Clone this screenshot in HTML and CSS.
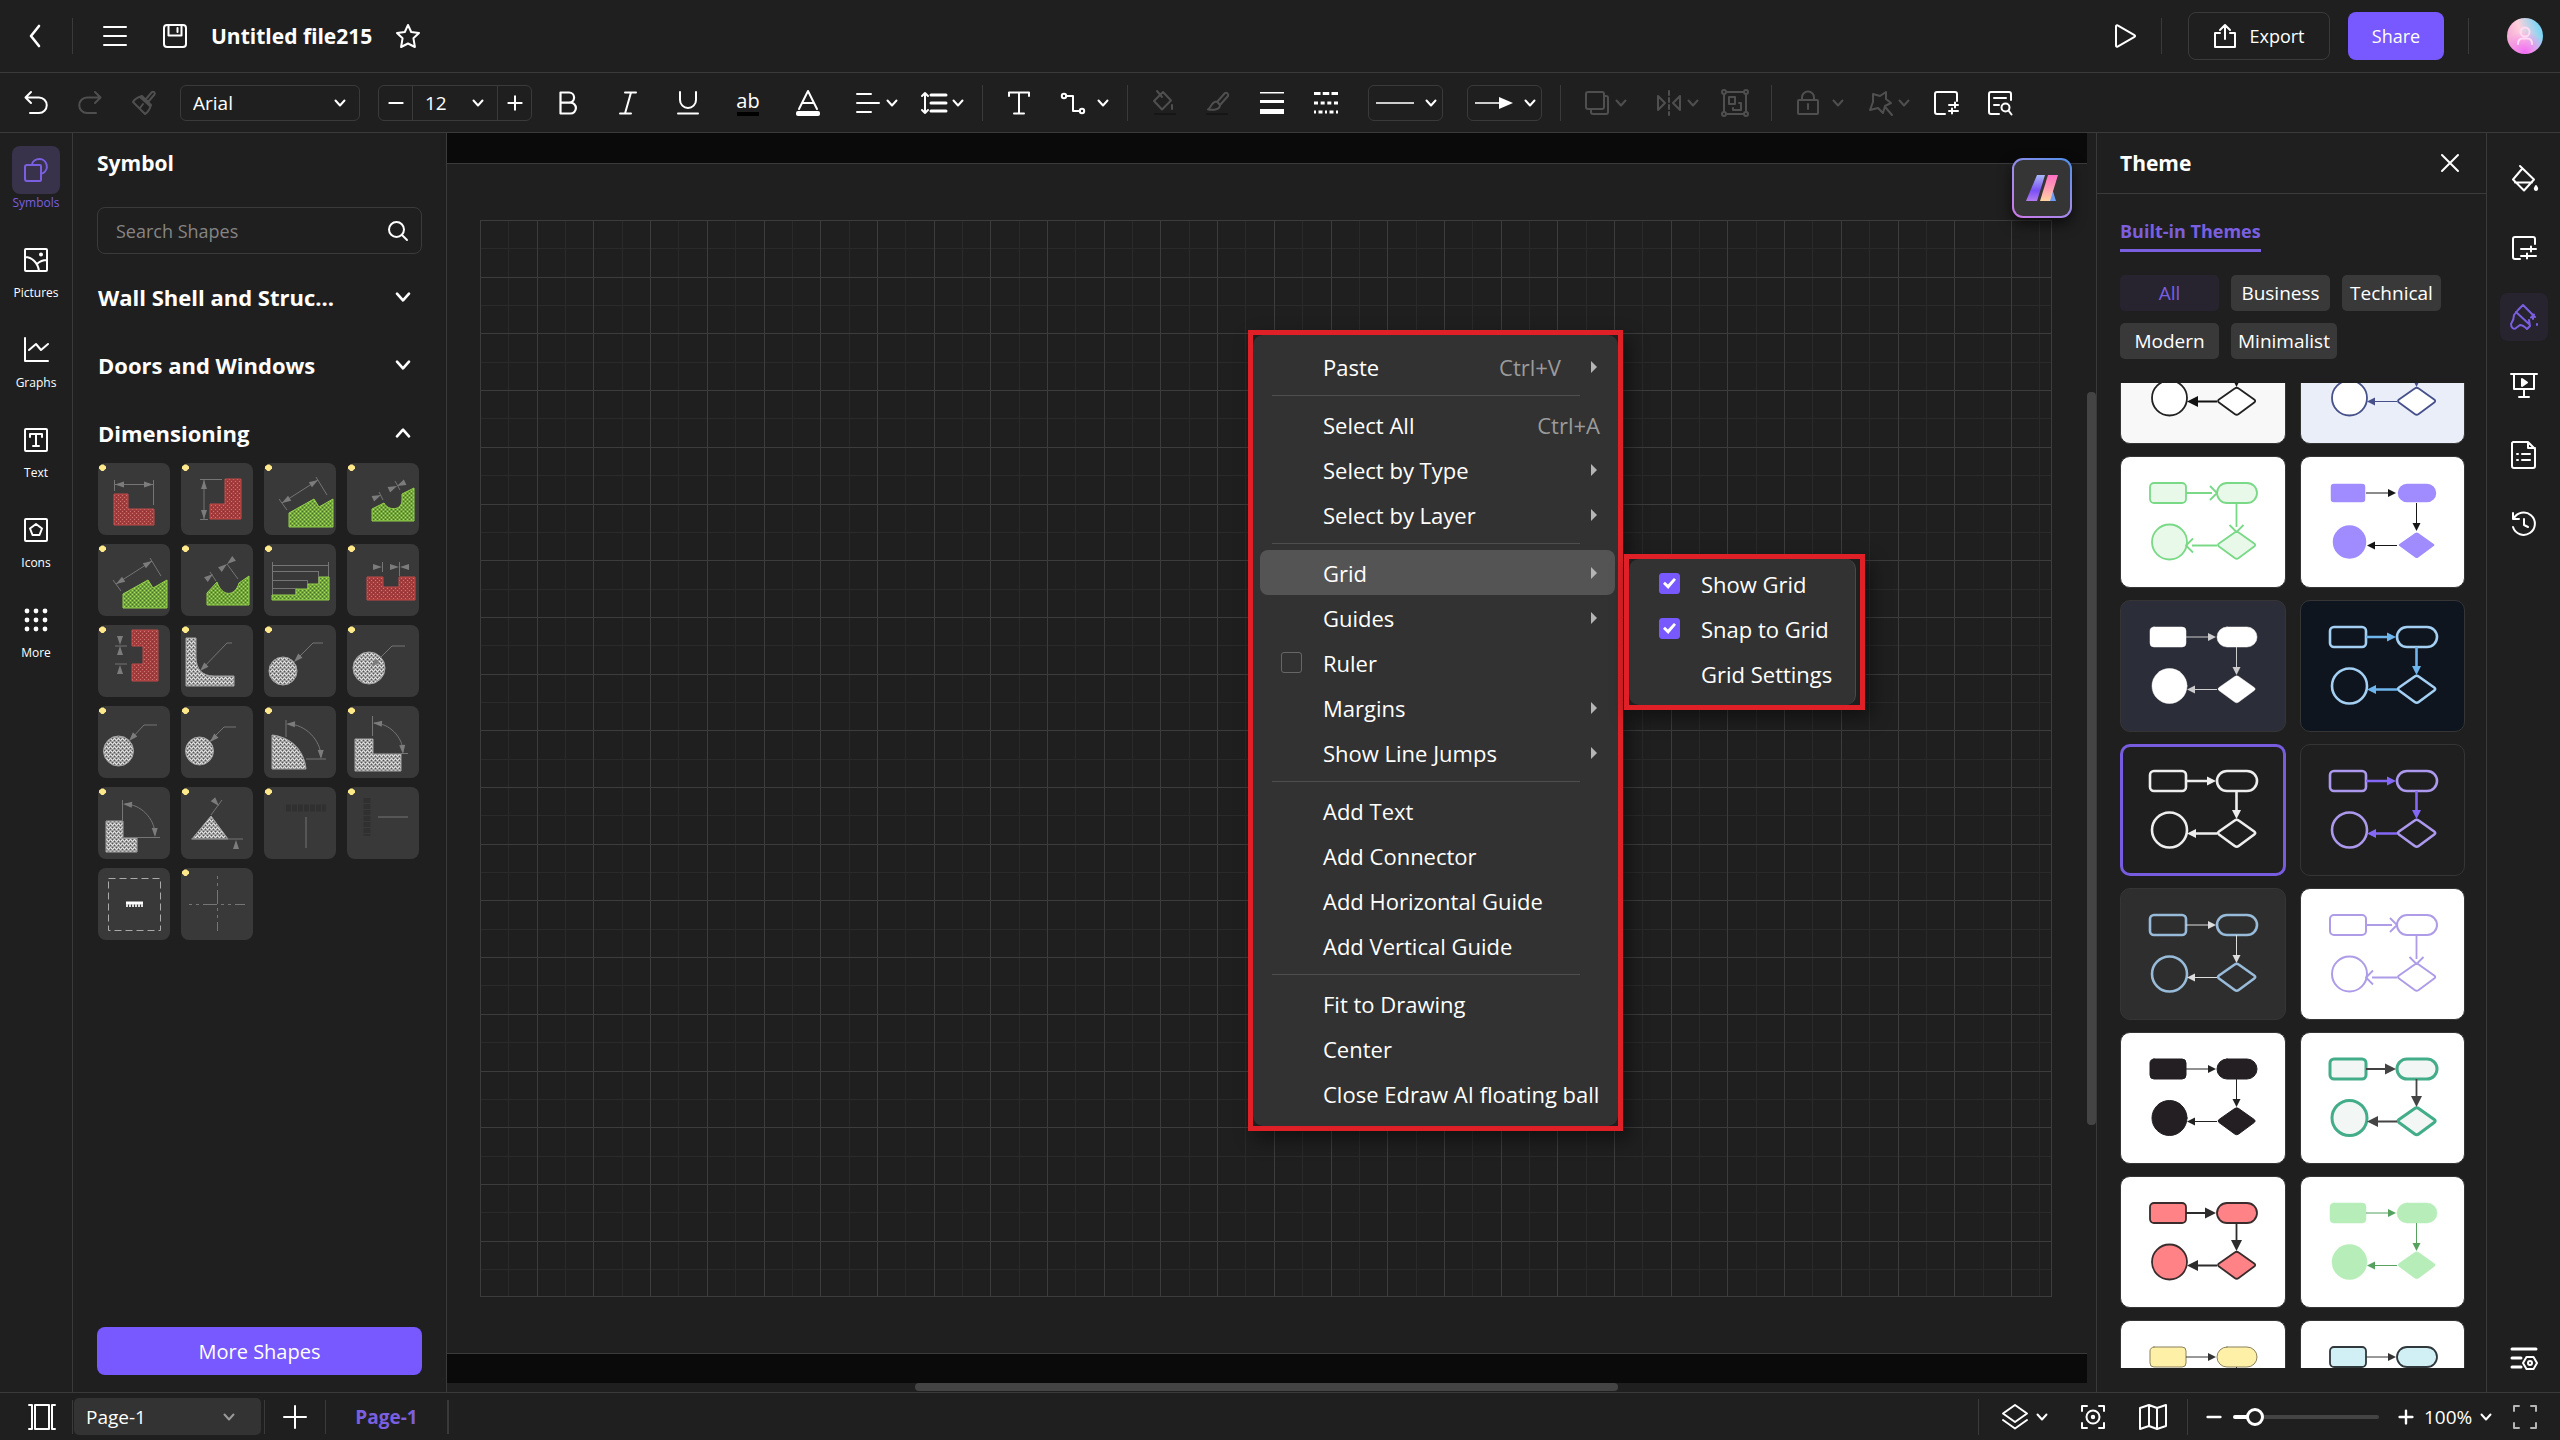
FILE: index.html
```html
<!DOCTYPE html>
<html lang="en">
<head>
    <meta charset="UTF-8">
    <meta name="viewport" content="width=device-width, initial-scale=1.0">
    <title>Untitled file215</title>
    <link rel="stylesheet" href="styles.css">
</head>
<body>
    <!-- shared symbols and hatch patterns -->
    <svg class="defs" width="0" height="0" aria-hidden="true">
        <defs>
            <symbol id="chevron" viewBox="0 0 12 12"><path d="M1.5 3.5 6 8.5l4.5-5"/></symbol>
            <symbol id="caret" viewBox="0 0 6 12"><path d="M0 0v12l6-6z" fill="#b5b5b5" stroke="none"/></symbol>
            <pattern id="red" width="4" height="4" patternUnits="userSpaceOnUse" stroke="none">
                <rect width="4" height="4" fill="#a23c3c"/><path d="M0 0h1v1H0zM2 2h1v1H2z" fill="#cf7674"/><path d="M2 0h1v1H2z" fill="#8b3334"/>
            </pattern>
            <pattern id="green" width="4" height="4" patternUnits="userSpaceOnUse" stroke="none">
                <rect width="4" height="4" fill="#72a53b"/><path d="M0 0h1v1H0zM2 2h1v1H2z" fill="#a7dc5c"/><path d="M2 0h1v1H2zM0 2h1v1H0z" fill="#48702a"/>
            </pattern>
            <pattern id="grey" width="4" height="4" patternUnits="userSpaceOnUse" stroke="none">
                <rect width="4" height="4" fill="#a2a2a2"/><path d="M0 0h1v1H0zM2 2h1v1H2zM1 1h1v1H1zM3 1h1v1H3z" fill="#e2e2e2"/><path d="M2 0h1v1H2zM0 2h1v1H0z" fill="#555"/>
            </pattern>
            <linearGradient id="aiLeft" x1="0" y1="0" x2="0" y2="1"><stop offset="0" stop-color="#a9b8f5"/><stop offset=".6" stop-color="#7a50f5"/><stop offset="1" stop-color="#b27bf0"/></linearGradient>
            <linearGradient id="aiRight" x1="0" y1="0" x2="0" y2="1"><stop offset="0" stop-color="#ff6fc3"/><stop offset=".5" stop-color="#ff9cb4"/><stop offset="1" stop-color="#ffd3a0"/></linearGradient>
        </defs>
    </svg>

    <header class="topbar">
        <button class="icon-btn" aria-label="Back"><svg class="icon" viewBox="0 0 24 24"><path d="M15 2 7 12l8 10" stroke-width="2.6"/></svg></button>
        <span class="sep sep-home"></span>
        <button class="icon-btn" aria-label="Menu"><svg class="icon" viewBox="0 0 24 24"><path d="M1 3h22M1 12h22M1 21h22"/></svg></button>
        <button class="icon-btn btn-save" aria-label="Save"><svg class="icon" viewBox="0 0 24 24"><path d="M1 4a3 3 0 0 1 3-3h16a3 3 0 0 1 3 3v16a3 3 0 0 1-3 3H4a3 3 0 0 1-3-3zM5.500 1v10.500h13V1M14.500 4v4"/></svg></button>
        <h1 class="file-name">Untitled file215</h1>
        <button class="icon-btn" aria-label="Favorite"><svg class="icon" viewBox="0 0 24 24"><path d="m12 1 3.200 7 7.800.9-5.600 5.300 1.500 8.800L12 19.500 5.100 23l1.500-8.800L1 8.900 8.800 8z"/></svg></button>
        <div class="top-right">
            <button class="icon-btn" aria-label="Present"><svg class="icon" viewBox="0 0 24 24"><path d="M3 2.200v19.600a1 1 0 0 0 1.600.8l16.900-9.700a1 1 0 0 0 0-1.800L4.600 1.400A1 1 0 0 0 3 2.200z"/></svg></button>
            <span class="sep"></span>
            <button class="btn btn-export"><svg class="icon" viewBox="0 0 24 24"><path d="M12 15V1.500M7 6l5-5 5 5M7 9H2v14h20V9h-5"/></svg>Export</button>
            <button class="btn btn-share">Share</button>
            <span class="sep sep-user"></span>
            <button class="avatar" aria-label="Account"><svg viewBox="0 0 36 36"><circle cx="18" cy="14" r="4.500"/><path d="M11 26c0-4 2-5.500 4.500-5.500h5c2.500 0 4.500 1.500 4.500 5.500"/></svg></button>
        </div>
    </header>

    <div class="toolbar" role="toolbar" aria-label="Format">
        <button class="tool" aria-label="Undo"><svg class="icon" viewBox="0 0 24 24"><path d="M7 1 1.500 6.500 7 12M2 6.500h13a7.500 7.500 0 0 1 0 15.500H6"/></svg></button>
        <button class="tool" aria-label="Redo" disabled><svg class="icon" viewBox="0 0 24 24"><path d="m17 1 5.500 5.500L17 12M22 6.500H9A7.500 7.500 0 0 0 9 22h9"/></svg></button>
        <button class="tool" aria-label="Format painter" disabled><svg class="icon" viewBox="0 0 24 24"><path d="m1 11 12 12c4-2 5-6 6-9l-9-9c-3 1-7 2-9 6zM8 6l10 9M14 8l6-7c1.500-1 3.500 1 2.500 2.500L16 11M8 17l3-4"/></svg></button>
        <div class="picker picker-font">
            <select aria-label="Font"><option>Arial</option></select>
            <svg class="chev"><use href="#chevron"/></svg>
        </div>
        <div class="stepper">
            <button aria-label="Smaller text"><svg class="icon" viewBox="0 0 24 24"><path d="M4 12h16" stroke-width="2.400"/></svg></button>
            <div class="picker">
                <select aria-label="Font size"><option>12</option></select>
                <svg class="chev"><use href="#chevron"/></svg>
            </div>
            <button aria-label="Larger text"><svg class="icon" viewBox="0 0 24 24"><path d="M4 12h16M12 4v16" stroke-width="2.400"/></svg></button>
        </div>
        <div class="text-tools">
            <button class="tool" aria-label="Bold"><svg class="icon" viewBox="0 0 24 24"><path d="M4.500 1.500H13a5 5 0 0 1 0 10.200H4.500zM4.500 11.700h10a5.300 5.300 0 0 1 0 10.800h-10z" stroke-width="2.200"/></svg></button>
            <button class="tool" aria-label="Italic"><svg class="icon" viewBox="0 0 24 24"><path d="M9 1.500h11M4 22.500h11M15 1.500 9 22.500"/></svg></button>
            <button class="tool" aria-label="Underline"><svg class="icon" viewBox="0 0 24 24"><path d="M4 1v8a8 8 0 0 0 16 0V1M2 22.500h20"/></svg></button>
            <button class="tool tool-mark" aria-label="Highlight color"><span>ab</span><i></i></button>
            <button class="tool" aria-label="Font color"><svg class="icon" viewBox="0 0 24 24"><path d="M3 18 12 0l9 18M6 12h12"/><rect y="20" width="24" height="5" rx="2" fill="#fff" stroke="none"/></svg></button>
        </div>
        <button class="tool-drop" aria-label="Align"><svg class="icon" viewBox="0 0 24 24"><path d="M1 3h14M1 12h22M1 21h14"/></svg><svg class="chev"><use href="#chevron"/></svg></button>
        <button class="tool-drop" aria-label="Line spacing"><svg class="icon" viewBox="0 0 24 24"><path d="M9 4h15M9 12h15M9 20h15" stroke-width="3"/><path d="M3 2v20M0 5l3-3 3 3M0 19l3 3 3-3"/></svg><svg class="chev"><use href="#chevron"/></svg></button>
        <span class="sep"></span>
        <button class="tool" aria-label="Text box"><svg class="icon" viewBox="0 0 24 24"><path d="M2 5V1.500h20V5M12 1.500v21M7 22.500h10"/></svg></button>
        <button class="tool-drop wide" aria-label="Connector"><svg class="icon" viewBox="0 0 24 24"><circle cx="3" cy="5" r="2.200"/><circle cx="21" cy="20" r="2.200"/><path d="M5 5h7v15h7"/></svg><svg class="chev"><use href="#chevron"/></svg></button>
        <span class="sep"></span>
        <button class="tool" aria-label="Fill" disabled><svg class="icon" viewBox="0 0 24 24"><path d="m5 0 5 6M11 1 2 10l8 8.500 9-9zM20 14v4"/><path d="M3 23h20" stroke="#161616"/></svg></button>
        <button class="tool" aria-label="Line color" disabled><svg class="icon" viewBox="0 0 24 24"><path d="m11 11 8-9c1.500-1 4 1 3 3l-8 9M11 10.500c-6 0-6 7-9 8 6 1 12 0 12-4.500z"/><path d="M1 23h20" stroke="#161616"/></svg></button>
        <button class="tool" aria-label="Line weight"><svg class="icon" viewBox="0 0 24 24"><path d="M0 1h24v1.500H0zM0 9h24v3H0zM0 18h24v5H0z" fill="#fff" stroke="none"/></svg></button>
        <button class="tool" aria-label="Line dash"><svg class="icon dash" viewBox="0 0 24 24"><path d="M0 2.500h24" stroke-dasharray="6.500 2.250"/><path d="M0 12h24" stroke-dasharray="4 2.660"/><path d="M0 21h24" stroke-dasharray="2 2.500 4 2.500"/></svg></button>
        <button class="tool-box" aria-label="Line style"><svg class="line-icon" viewBox="0 0 38 24"><path d="M0 12h38" stroke="#ccc" stroke-width="2"/></svg><svg class="chev"><use href="#chevron"/></svg></button>
        <button class="tool-box" aria-label="Arrow style"><svg class="line-icon" viewBox="0 0 38 24"><path d="M0 12h26" stroke="#ccc" stroke-width="2"/><path d="M24 6v12l14-6z" fill="#fff" stroke="none"/></svg><svg class="chev"><use href="#chevron"/></svg></button>
        <span class="sep"></span>
        <button class="tool-drop" aria-label="Arrange" disabled><svg class="icon" viewBox="0 0 24 24"><path d="M3 1h14a2 2 0 0 1 2 2v13a2 2 0 0 1-2 2H3a2 2 0 0 1-2-2V3a2 2 0 0 1 2-2zM20 5h1a2 2 0 0 1 2 2v14a2 2 0 0 1-2 2H8a2 2 0 0 1-2-2v-2"/></svg><svg class="chev"><use href="#chevron"/></svg></button>
        <button class="tool-drop tool-flip" aria-label="Flip" disabled><svg class="icon" viewBox="0 0 24 24"><path d="M1 5v14l7-7zM23 5v14l-7-7z"/><path d="M12 0v24" stroke-dasharray="4 3"/></svg><svg class="chev"><use href="#chevron"/></svg></button>
        <button class="tool" aria-label="Group" disabled><svg class="icon icon-lg" viewBox="0 0 28 28"><path d="M5 3h18M5 25h18M3 5v18M25 5v18M8 8h6v7H8zM18 14h2v7h-8v-2"/><circle cx="3" cy="3" r="2"/><circle cx="25" cy="3" r="2"/><circle cx="3" cy="25" r="2"/><circle cx="25" cy="25" r="2"/></svg></button>
        <span class="sep"></span>
        <button class="tool-drop wide" aria-label="Lock" disabled><svg class="icon" viewBox="0 0 24 24"><path d="M3 9h18a1 1 0 0 1 1 1v12a1 1 0 0 1-1 1H3a1 1 0 0 1-1-1V10a1 1 0 0 1 1-1zM6 9V6.500a6 6 0 0 1 12 0V9M12 13v5"/></svg><svg class="chev"><use href="#chevron"/></svg></button>
        <button class="tool-drop" aria-label="Effects" disabled><svg class="icon" viewBox="0 0 24 24"><path d="m5 3 7 2 6-4v7l5 4-6 3-2 7-5-5-8 2 3-8zM18 17l6 7"/></svg><svg class="chev"><use href="#chevron"/></svg></button>
        <button class="tool" aria-label="Page setup"><svg class="icon" viewBox="0 0 24 24"><path d="M23 10V3a2 2 0 0 0-2-2H3a2 2 0 0 0-2 2v18a2 2 0 0 0 2 2h8M15 14h9M15 20h9M21 11.500v5M18 17.500v5"/></svg></button>
        <button class="tool" aria-label="Find"><svg class="icon" viewBox="0 0 24 24"><path d="M23 9V3a2 2 0 0 0-2-2H3a2 2 0 0 0-2 2v18a2 2 0 0 0 2 2h8M6 7h12M6 14h5"/><circle cx="17.500" cy="16.500" r="4"/><path d="m20.500 19.500 3 4"/></svg></button>
    </div>

    <main class="workspace">
        <nav class="rail" aria-label="Libraries">
            <a href="#symbols" class="rail-item active"><span class="rail-icon"><svg class="icon" viewBox="0 0 24 24"><path d="M8 7C8 3 12 1 15.500 1a7.500 7.500 0 0 1 3 14.300M3 7h13a1 1 0 0 1 1 1v14a1 1 0 0 1-1 1H3a2 2 0 0 1-2-2V9a2 2 0 0 1 2-2z"/></svg></span>Symbols</a>
            <a href="#pictures" class="rail-item"><span class="rail-icon"><svg class="icon" viewBox="0 0 24 24"><path d="M2 1h20a1 1 0 0 1 1 1v20a1 1 0 0 1-1 1H2a1 1 0 0 1-1-1V2a1 1 0 0 1 1-1zM1 9c7 0 13 6 14 14M13 16c3-3 6-4 10-4"/><circle cx="17" cy="6.500" r="1"/></svg></span>Pictures</a>
            <a href="#graphs" class="rail-item"><span class="rail-icon"><svg class="icon" viewBox="0 0 24 24"><path d="M1 0v23h23M5 12l7-6 5 6 7-6"/></svg></span>Graphs</a>
            <a href="#text" class="rail-item"><span class="rail-icon"><svg class="icon" viewBox="0 0 24 24"><path d="M2 1h20a1 1 0 0 1 1 1v20a1 1 0 0 1-1 1H2a1 1 0 0 1-1-1V2a1 1 0 0 1 1-1zM6 9V6h12v3M12 6v12M9 18h6"/></svg></span>Text</a>
            <a href="#icons" class="rail-item"><span class="rail-icon"><svg class="icon" viewBox="0 0 24 24"><path d="M2 1h20a1 1 0 0 1 1 1v20a1 1 0 0 1-1 1H2a1 1 0 0 1-1-1V2a1 1 0 0 1 1-1zM12 6l6 4.500L15.500 17h-7L6 10.500z"/></svg></span>Icons</a>
            <a href="#more" class="rail-item"><span class="rail-icon"><svg class="icon dots" viewBox="0 0 24 24"><circle cx="3" cy="3" r="2.400"/><circle cx="12" cy="3" r="2.400"/><circle cx="21" cy="3" r="2.400"/><circle cx="3" cy="12" r="2.400"/><circle cx="12" cy="12" r="2.400"/><circle cx="21" cy="12" r="2.400"/><circle cx="3" cy="21" r="2.400"/><circle cx="12" cy="21" r="2.400"/><circle cx="21" cy="21" r="2.400"/></svg></span>More</a>
        </nav>

        <aside class="symbols">
            <h2>Symbol</h2>
            <div class="search">
                <input type="text" placeholder="Search Shapes" aria-label="Search Shapes">
                <button aria-label="Search"><svg class="icon icon-sm" viewBox="0 0 20 20"><circle cx="8.500" cy="8.500" r="7.500"/><path d="m14 14 5 5"/></svg></button>
            </div>
            <button class="section">Wall Shell and Struc...<svg class="chev"><use href="#chevron"/></svg></button>
            <button class="section">Doors and Windows<svg class="chev"><use href="#chevron"/></svg></button>
            <button class="section open">Dimensioning<svg class="chev"><use href="#chevron"/></svg></button>
            <div class="shapes" id="shapes"></div>
            <button class="btn btn-more">More Shapes</button>
        </aside>

        <section class="canvas">
            <div class="viewport">
                <div class="page"><svg class="grid" id="grid"></svg></div>
            </div>
            <div class="vscroll"><i></i></div>
            <div class="hscroll"><i></i></div>

            <button class="ai-ball" aria-label="Edraw AI">
                <svg viewBox="0 0 34 28"><path d="m27 14 4 13h-9z" fill="#6a9cf5"/><path d="M12 1h8l-8 26H1z" fill="url(#aiLeft)"/><path d="M23 1h10l-8 26H15z" fill="url(#aiRight)"/></svg>
            </button>

            <div class="frame frame-menu">
                <div class="menu" role="menu">
                    <button class="item">Paste<kbd>Ctrl+V</kbd><svg class="caret"><use href="#caret"/></svg></button>
                    <hr>
                    <button class="item">Select All<kbd>Ctrl+A</kbd></button>
                    <button class="item">Select by Type<svg class="caret"><use href="#caret"/></svg></button>
                    <button class="item">Select by Layer<svg class="caret"><use href="#caret"/></svg></button>
                    <hr>
                    <button class="item current">Grid<svg class="caret"><use href="#caret"/></svg></button>
                    <button class="item">Guides<svg class="caret"><use href="#caret"/></svg></button>
                    <label class="item check"><input type="checkbox">Ruler</label>
                    <button class="item">Margins<svg class="caret"><use href="#caret"/></svg></button>
                    <button class="item">Show Line Jumps<svg class="caret"><use href="#caret"/></svg></button>
                    <hr>
                    <button class="item">Add Text</button>
                    <button class="item">Add Connector</button>
                    <button class="item">Add Horizontal Guide</button>
                    <button class="item">Add Vertical Guide</button>
                    <hr>
                    <button class="item">Fit to Drawing</button>
                    <button class="item">Center</button>
                    <button class="item">Close Edraw AI floating ball</button>
                </div>
            </div>
            <div class="frame frame-sub">
                <div class="menu" role="menu">
                    <label class="item check"><input type="checkbox" checked>Show Grid</label>
                    <label class="item check"><input type="checkbox" checked>Snap to Grid</label>
                    <button class="item">Grid Settings</button>
                </div>
            </div>
        </section>

        <aside class="themes">
            <div class="themes-head">
                <h2>Theme</h2>
                <button class="close" aria-label="Close"><svg class="icon icon-sm" viewBox="0 0 20 20"><path d="m2 2 16 16M18 2 2 18"/></svg></button>
            </div>
            <div class="themes-body">
                <a href="#built-in" class="themes-tab">Built-in Themes</a>
                <div class="tags">
                    <button class="tag active">All</button>
                    <button class="tag">Business</button>
                    <button class="tag">Technical</button>
                    <button class="tag">Modern</button>
                    <button class="tag">Minimalist</button>
                </div>
                <div class="theme-list" id="themes"></div>
            </div>
        </aside>

        <nav class="tabs" aria-label="Panels">
            <button class="tab" aria-label="Style"><svg class="icon icon-lg" viewBox="0 0 28 28"><path d="m10 1 14 13.500-10 11-11-11L11.500 4.500M5 17.500h17"/><path d="M26 21c2 3 1 4 0 4s-2-1 0-4z" fill="#fff"/></svg></button>
            <button class="tab" aria-label="Page"><svg class="icon" viewBox="0 0 24 24"><path d="M23 8V3a2 2 0 0 0-2-2H3a2 2 0 0 0-2 2v18a2 2 0 0 0 2 2h5M9 13h15M9 20h15M19 10.500v5M15 17.500v5"/></svg></button>
            <button class="tab active" aria-label="Theme"><svg class="icon icon-lg" viewBox="0 0 28 28"><path d="m8 7 5-5 12 12M6 9l13 12M8 7l-4 5c0 4-1 6-3 9 0 4 3 6 5 4l4-3c3 0 5 2 7 4l3-3-1-6M24 11.500l-3 3M23 12v4M27 21v1"/></svg></button>
            <button class="tab" aria-label="Slides"><svg class="icon icon-lg" viewBox="0 0 28 28"><path d="M1 2h26M4 2v15h20V2M14 17v7M9 25h10"/><path d="m12 7 5 3.500-5 3.500z" fill="#fff"/></svg></button>
            <button class="tab" aria-label="Notes"><svg class="icon icon-lg" viewBox="0 0 28 28"><path d="M3 1h15l7 7v17a2 2 0 0 1-2 2H4a2 2 0 0 1-2-2V2zM18 1v6h7M12 13h8M12 19h8M7 13h1M7 19h1"/></svg></button>
            <button class="tab" aria-label="History"><svg class="icon" viewBox="0 0 24 24"><path d="M1 1v6h6M1.500 7a11.200 11.200 0 1 1-.5 8M12 7v6l4 2"/></svg></button>
            <button class="tab tab-last" aria-label="Settings"><svg class="icon icon-lg" viewBox="0 0 28 28"><path d="M2 4h24M2 13h9M2 22h9" stroke-width="3"/><path d="M16.500 12h7l3.500 6-3.500 6h-7L13 18z"/><circle cx="20" cy="18" r="2"/></svg></button>
        </nav>
    </main>

    <footer class="status">
        <button class="pages" aria-label="Page list"><svg class="icon icon-lg" viewBox="0 0 28 28"><path d="M7 2h14v24H7zM1 2h3v24H1M27 2h-3v24h3"/></svg></button>
        <div class="picker picker-page">
            <select aria-label="Page"><option>Page-1</option></select>
            <svg class="chev"><use href="#chevron"/></svg>
        </div>
        <button class="add-page" aria-label="Add page"><svg class="icon" viewBox="0 0 24 24"><path d="M1 12h22M12 1v22"/></svg></button>
        <a href="#page-1" class="page-tab">Page-1</a>
        <div class="status-right">
            <button class="tool-drop" aria-label="Layers"><svg class="icon" viewBox="0 0 24 24"><path d="M12 0 0 8.500 12 17l12-8.500zM0 15l12 8.500L24 15"/></svg><svg class="chev"><use href="#chevron"/></svg></button>
            <button class="tool" aria-label="Focus"><svg class="icon" viewBox="0 0 24 24"><path d="M1 6V1h5M18 1h5v5M23 18v5h-5M6 23H1v-5"/><circle cx="12" cy="12" r="6.500"/><circle cx="12" cy="12" r="1.200"/></svg></button>
            <button class="tool" aria-label="Map"><svg class="icon icon-lg" viewBox="0 0 28 28"><path d="m1 5 9-3 8 3 9-3v21l-9 3-8-3-9 3zM10 2v21M18 5v21"/></svg></button>
            <span class="sep"></span>
            <div class="zoom">
                <button aria-label="Zoom out"><svg class="icon icon-sm" viewBox="0 0 20 20"><path d="M2 10h16" stroke-width="3"/></svg></button>
                <input type="range" min="0" max="100" value="10" aria-label="Zoom">
                <button aria-label="Zoom in"><svg class="icon icon-sm" viewBox="0 0 20 20"><path d="M2 10h16M10 2v16" stroke-width="3"/></svg></button>
            </div>
            <div class="picker picker-zoom">
                <select aria-label="Zoom level"><option>100%</option></select>
                <svg class="chev"><use href="#chevron"/></svg>
            </div>
            <button class="tool full" aria-label="Full screen"><svg class="icon" viewBox="0 0 24 24"><path d="M1 6V1h5M18 1h5v5M23 18v5h-5M6 23H1v-5"/></svg></button>
        </div>
    </footer>

    <script src="script.js"></script>
</body>
</html>
```

FILE: styles.css
```css
* {
    margin: 0;
    padding: 0;
    box-sizing: border-box;
}

:root {
    --bg: #1f1f1f;
    --line: #3a3a3a;
    --tile: #393939;
    --accent: #7858ff;
    --accent-text: #7a5fe0;
}

body {
    height: 100vh;
    display: flex;
    flex-direction: column;
    background: var(--bg);
    color: #fff;
    font-family: 'Open Sans', 'Noto Sans', sans-serif;
    font-size: 20px;
    overflow: hidden;
}

button, select, input {
    font: inherit;
    color: inherit;
    background: none;
    border: 0;
}

a {
    color: inherit;
    text-decoration: none;
}

svg {
    display: block;
    flex: none;
    fill: none;
    stroke: currentColor;
    stroke-width: 2;
    stroke-linecap: round;
    stroke-linejoin: round;
    overflow: visible;
}

.defs {
    position: absolute;
}

.icon {
    width: 24px;
    height: 24px;
}

.icon-sm {
    width: 20px;
    height: 20px;
}

.icon-lg {
    width: 28px;
    height: 28px;
}

.chev {
    width: 12px;
    height: 12px;
}

.dash {
    stroke-width: 3;
    stroke-linecap: butt;
}

.sep {
    width: 1px;
    height: 36px;
    background: var(--line);
}

/* Top bar */
.topbar {
    height: 73px;
    display: flex;
    align-items: center;
    gap: 18px;
    padding: 0 17px 0 18px;
    border-bottom: 1px solid var(--line);
}

.icon-btn {
    width: 36px;
    height: 36px;
    display: grid;
    place-items: center;
}

.sep-home {
    margin-right: 6px;
}

.btn-save {
    margin-left: 6px;
}

.file-name {
    font-size: 21px;
    font-weight: 700;
}

.top-right {
    margin-left: auto;
    display: flex;
    align-items: center;
    gap: 18px;
}

.btn {
    height: 48px;
    border-radius: 8px;
    display: flex;
    align-items: center;
    justify-content: center;
    gap: 12px;
}

.btn-export {
    width: 142px;
    margin-left: 8px;
    border: 1px solid var(--line);
    font-size: 18px;
}

.btn-share {
    width: 96px;
    background: var(--accent);
    font-size: 18px;
}

.sep-user {
    margin: 0 20px 0 6px;
}

.avatar {
    width: 36px;
    height: 36px;
    border-radius: 50%;
    background: radial-gradient(circle at 50% 95%, #f06cf5, transparent 55%), linear-gradient(70deg, #f5a9d8 15%, #ffd0da 45%, #7fd6f5 85%);
}

.avatar svg {
    stroke: #ffdcf5;
}

/* Toolbar */
.toolbar {
    height: 60px;
    display: flex;
    align-items: center;
    gap: 18px;
    padding: 0 18px;
    border-bottom: 1px solid var(--line);
}

.tool {
    width: 36px;
    height: 36px;
    display: grid;
    place-items: center;
}

button:disabled {
    color: #4f4f4f;
}

.text-tools {
    display: flex;
    gap: 24px;
    margin-right: 6px;
}

.tool-mark {
    align-content: center;
    line-height: 22px;
}

.tool-mark i {
    width: 22px;
    height: 4px;
    background: #000;
}

.tool-drop {
    display: flex;
    align-items: center;
    gap: 6px;
    padding-left: 6px;
}

.tool-drop.wide {
    gap: 12px;
}

.tool-flip {
    margin-left: 6px;
}

.tool-box {
    width: 75px;
    height: 36px;
    display: flex;
    align-items: center;
    justify-content: space-between;
    padding: 0 5px 0 7px;
    margin-left: 6px;
    border: 1px solid var(--line);
    border-radius: 6px;
}

.line-icon {
    width: 38px;
    height: 24px;
    stroke-linecap: butt;
}

.picker {
    display: grid;
    grid-template-columns: 1fr auto;
    align-items: center;
}

.picker select {
    grid-area: 1 / 1 / 2 / 3;
    width: 100%;
    height: 100%;
    padding-left: 12px;
    appearance: none;
    font-size: 19px;
}

.picker .chev {
    grid-area: 1 / 2;
    margin-right: 13px;
    pointer-events: none;
}

.picker-font {
    width: 180px;
    height: 36px;
    border: 1px solid var(--line);
    border-radius: 6px;
}

.stepper {
    display: flex;
    width: 154px;
    height: 36px;
    border: 1px solid var(--line);
    border-radius: 6px;
}

.stepper button {
    width: 33px;
    display: grid;
    place-items: center;
}

.stepper .icon {
    width: 20px;
    height: 20px;
}

.stepper .picker {
    flex: 1;
    border: solid var(--line);
    border-width: 0 1px;
}

/* Workspace */
.workspace {
    flex: 1;
    min-height: 0;
    display: grid;
    grid-template-columns: 73px 374px 1fr 390px 74px;
}

.rail {
    display: flex;
    flex-direction: column;
    align-items: center;
    gap: 24px;
    padding-top: 13px;
    border-right: 1px solid var(--line);
}

.rail-item {
    display: flex;
    flex-direction: column;
    align-items: center;
    font-size: 12px;
    line-height: 18px;
}

.rail-icon {
    width: 48px;
    height: 48px;
    border-radius: 8px;
    display: grid;
    place-items: center;
}

.rail-item.active {
    color: var(--accent-text);
}

.active .rail-icon {
    background: #38324a;
}

.dots {
    fill: #fff;
    stroke: none;
}

.symbols {
    display: flex;
    flex-direction: column;
    padding: 0 24px 17px;
    border-right: 1px solid var(--line);
}

h2 {
    font-size: 21px;
    font-weight: 700;
    line-height: 60px;
}

.search {
    height: 47px;
    margin: 14px 0 9px;
    display: flex;
    align-items: center;
    border: 1px solid var(--line);
    border-radius: 8px;
}

.search input {
    flex: 1;
    min-width: 0;
    padding-left: 18px;
    font-size: 18px;
    outline: none;
}

.search input::placeholder {
    color: #858585;
}

.search button {
    width: 46px;
    display: grid;
    place-items: center;
}

.section {
    height: 68px;
    display: flex;
    align-items: center;
    justify-content: space-between;
    padding: 0 11px 0 1px;
    font-size: 22px;
    font-weight: 700;
    text-align: left;
}

.section .chev {
    width: 16px;
    height: 16px;
}

.section.open .chev {
    transform: rotate(180deg);
}

.shapes {
    display: grid;
    grid-template-columns: repeat(4, 72px);
    gap: 9px 11px;
    margin: -4px 0 auto 1px;
}

.shape {
    width: 72px;
    height: 72px;
    border-radius: 8px;
    background: var(--tile);
}

.shape svg {
    width: 72px;
    height: 72px;
    stroke: #757575;
    stroke-width: 1;
    stroke-linecap: butt;
    stroke-linejoin: miter;
}

.shape .tip {
    fill: #7c7c7c;
    stroke: none;
}

.shape .mark {
    fill: #ffe98a;
    stroke: none;
}

.shape .red {
    fill: url(#red);
    stroke: #c14b4b;
}

.shape .green {
    fill: url(#green);
    stroke: #93d04a;
}

.shape .grey {
    fill: url(#grey);
    stroke: #a5a5a5;
}

.shape .faint {
    stroke: #303030;
    stroke-width: 7;
    stroke-dasharray: 5 1;
}

.btn-more {
    background: var(--accent);
}

/* Drawing area */
.canvas {
    position: relative;
    min-width: 0;
    display: grid;
    grid-template: 1fr 9px / 1fr 9px;
}

.viewport {
    padding: 30px 0 29px;
    background: #0a0a0a;
    display: flex;
}

.page {
    flex: 1;
    display: flex;
    padding: 56px 35px 56px 33px;
    background: var(--bg);
    border: solid var(--line);
    border-width: 1px 0;
}

.grid {
    flex: 1;
    min-width: 0;
    height: 100%;
    stroke-width: 1;
    shape-rendering: crispEdges;
}

.grid .minor {
    stroke: #2a2a2a;
}

.grid .major {
    stroke: #3c3c3c;
}

.vscroll {
    padding-top: 259px;
}

.vscroll i {
    display: block;
    height: 74%;
    border-radius: 4px;
    background: #444;
}

.hscroll {
    padding-left: 468px;
}

.hscroll i {
    display: block;
    width: 60%;
    height: 8px;
    border-radius: 4px;
    background: #444;
}

.ai-ball {
    position: absolute;
    top: 25px;
    right: 24px;
    width: 60px;
    height: 60px;
    display: grid;
    place-items: center;
    border: 2px solid transparent;
    border-radius: 11px;
    background: linear-gradient(#353535, #353535) padding-box, linear-gradient(215deg, #4d90ea, #9a8cec 50%, #cf78e8) border-box;
    box-shadow: 0 6px 14px rgba(0, 0, 0, .6);
}

.ai-ball svg {
    width: 34px;
    height: 28px;
    stroke: none;
}

.frame {
    position: absolute;
    border: 5px solid #df2027;
    background: var(--bg);
    box-shadow: 6px 8px 18px rgba(0, 0, 0, .45);
}

.frame-menu {
    top: 197px;
    left: 801px;
    width: 375px;
}

.frame-sub {
    top: 421px;
    left: 1177px;
    width: 241px;
    padding-right: 4px;
}

.menu {
    padding: 9px 3px 10px 7px;
    border-radius: 10px;
    background: #323232;
}

.frame-sub .menu {
    padding: 2px 9px 9px;
    border-right: 1px solid #4a4a4a;
}

.item {
    width: 100%;
    height: 45px;
    display: flex;
    align-items: center;
    padding: 0 15px 0 63px;
    border-radius: 8px;
    font-size: 22px;
    text-align: left;
    white-space: nowrap;
}

.item.current {
    background: #545454;
}

.item.check {
    gap: 21px;
    padding-left: 21px;
}

.item input {
    width: 21px;
    height: 21px;
    appearance: none;
    border: 1px solid #666;
    border-radius: 3px;
    display: grid;
    place-items: center;
}

.item input:checked {
    background: var(--accent);
    border-color: var(--accent);
}

.item input:checked::before {
    content: '';
    width: 13px;
    height: 11px;
    background: #fff;
    clip-path: polygon(0 52%, 15% 34%, 38% 60%, 84% 0, 100% 16%, 40% 100%);
}

.item kbd {
    margin-left: auto;
    font: inherit;
    color: #9b9b9b;
}

.caret {
    width: 6px;
    height: 12px;
    margin: 0 3px 0 auto;
}

kbd + .caret {
    margin-left: 30px;
}

.menu hr {
    height: 1px;
    margin: 6px 35px 6px 12px;
    border: 0;
    background: #4e4e4e;
}

/* Theme panel */
.themes {
    min-height: 0;
    display: flex;
    flex-direction: column;
    border-left: 1px solid var(--line);
}

.themes-head {
    display: flex;
    justify-content: space-between;
    padding: 0 26px 0 23px;
    border-bottom: 1px solid var(--line);
}

.close {
    width: 20px;
}

.themes-body {
    flex: 1;
    min-height: 0;
    display: flex;
    flex-direction: column;
    align-items: flex-start;
    padding: 22px 21px 24px 23px;
}

.themes-tab {
    padding-bottom: 2px;
    border-bottom: 3px solid var(--accent-text);
    color: var(--accent-text);
    font-size: 18px;
    font-weight: 700;
    line-height: 31px;
}

.tags {
    display: flex;
    flex-wrap: wrap;
    gap: 12px;
    margin: 23px 0 24px;
}

.tag {
    min-width: 99px;
    height: 36px;
    padding: 0 7px;
    border-radius: 5px;
    background: var(--tile);
    font-size: 19px;
}

.tag.active {
    background: #272430;
    color: var(--accent-text);
}

.theme-list {
    flex: 1;
    min-height: 0;
    width: 100%;
    display: grid;
    grid-template-columns: repeat(2, minmax(0, 1fr));
    grid-auto-rows: 132px;
    gap: 12px 14px;
    overflow-y: auto;
    scrollbar-width: none;
}

.theme {
    border: 1px solid #353535;
    border-radius: 10px;
    display: flex;
    align-items: center;
    justify-content: center;
}

.theme.selected {
    border: 3px solid #785ce0;
}

.theme svg {
    width: 165px;
    height: 132px;
}

.tabs {
    display: flex;
    flex-direction: column;
    align-items: center;
    gap: 21px;
    padding: 22px 0 9px;
    border-left: 1px solid var(--line);
}

.tab {
    width: 48px;
    height: 48px;
    border-radius: 8px;
    display: grid;
    place-items: center;
}

.tab.active {
    background: #272430;
    color: var(--accent-text);
}

.tab-last {
    margin-top: auto;
}

/* Status bar */
.status {
    height: 48px;
    display: flex;
    align-items: center;
    border-top: 1px solid var(--line);
}

.pages {
    width: 73px;
    height: 34px;
    display: grid;
    place-items: center;
    padding-left: 12px;
    border-right: 1px solid var(--line);
}

.picker-page {
    width: 187px;
    height: 37px;
    margin: 0 3px 0 1px;
    border-radius: 5px;
    background: #333;
}

.picker-page .chev {
    margin-right: 26px;
    color: #999;
}

.add-page {
    width: 62px;
    height: 34px;
    display: grid;
    place-items: center;
    border: solid var(--line);
    border-width: 0 1px;
}

.page-tab {
    width: 123px;
    border-right: 2px solid var(--line);
    color: var(--accent-text);
    font-size: 19px;
    font-weight: 700;
    line-height: 34px;
    text-align: center;
}

.status-right {
    margin-left: auto;
    display: flex;
    align-items: center;
    gap: 24px;
    padding-right: 17px;
    border-left: 1px solid var(--line);
}

.status-right .tool-drop {
    padding: 0 3px 0 0;
    margin-left: 24px;
    gap: 9px;
}

.status-right .sep {
    margin: 0 -8px;
}

.zoom {
    display: flex;
    align-items: center;
    gap: 9px;
}

.zoom button {
    width: 20px;
    display: grid;
    place-items: center;
}

.zoom .icon {
    width: 16px;
    height: 16px;
}

.zoom input {
    width: 146px;
    height: 20px;
    margin-right: 8px;
    appearance: none;
}

.zoom input::-webkit-slider-runnable-track {
    height: 4px;
    border-radius: 2px;
    background: linear-gradient(90deg, #fff 10%, #444 10%);
}

.zoom input::-webkit-slider-thumb {
    appearance: none;
    width: 18px;
    height: 18px;
    margin-top: -7px;
    border: 3px solid #fff;
    border-radius: 50%;
    background: var(--bg);
}

.picker-zoom {
    width: 68px;
    margin-left: -16px;
}

.picker-zoom select {
    padding: 0;
}

.picker-zoom .chev {
    margin: 0;
}

.full {
    color: #b5b5b5;
    margin-left: -9px;
}
```

FILE: script.js
```js
// Arrow head with its tip at x,y, turned by deg (0 points right)
function tip(x, y, deg) {
    return `<path class="tip" d="M0 0l-9-3v6z" transform="translate(${x} ${y}) rotate(${deg})"/>`;
}

function line(d) {
    return `<path d="${d}"/>`;
}

function solid(color, d) {
    return `<path class="${color}" d="${d}"/>`;
}

function disc(x, y, r) {
    return `<circle class="grey" cx="${x}" cy="${y}" r="${r}"/>`;
}

const slope = line('M18 40 54 17M15 36l8 11M52 14l11 18') + tip(18, 40, 148) + tip(54, 17, -32) +
    solid('green', 'M25 50 50 36l5 8 14-8v28H25z');

const shapes = [
    line('M16.500 17v11M55.500 17v25M17 21.500h38') + tip(17, 21.500, 180) + tip(55, 21.500, 0) + solid('red', 'M16 31h14v15h26v16H16z'),
    line('M23 16v40M19 16.500h22M19 56.500h8') + tip(23, 17, -90) + tip(23, 56, 90) + solid('red', 'M44 16h16v40H29V41h15z'),
    slope,
    line('M32 29l4 8M48 18l5 9') + tip(34, 32, -25) + tip(50, 23, -25) + tip(50, 23, 155) + solid('green', 'M25 46l12-6c4 8 18 8 18-3v-6l12-6v33H25z'),
    slope,
    line('M29 28l6 9M46 20l11 15') + tip(32, 30, -38) + tip(46, 20, -38) + tip(46, 20, 142) + solid('green', 'M26 49l10-11c5 15 18 15 22 1l10-7v29H26z'),
    line('M8.500 18v33M8 21.500h57M8 27.500h47M8 36.500h36M8 44.500h24M64.500 18v15M54.500 27v13M43.500 36v9M32 44v7') + solid('green', 'M8 51h24v-6h12v-5h11v-7h10v23H8z'),
    line('M35.500 18v10M52.500 18v14') + tip(35, 23, 0) + tip(52, 23, 0) + tip(53, 23, 180) + solid('red', 'M20 33h16v10h16V33h16v23H20z'),
    line('M17 21h12M17 39h12') + tip(22, 20, 90) + tip(22, 21, -90) + tip(22, 40, -90) + solid('red', 'M34 5h26v51H34V39h11V21H34z'),
    solid('grey', 'M5 13h10v19c0 12 6 19 18 19h20v10H5z') + line('M51 18h-5L20 45') + tip(19, 46, 135),
    disc(19, 46, 14) + line('M59 18H49L31 36') + tip(30, 37, 135),
    disc(22, 43, 16) + line('M58 21H45L24 42') + tip(24, 42, 135),
    disc(20.500, 45, 15) + line('M59 19H46L32 34') + tip(31, 35, 133),
    disc(18.500, 45, 14) + line('M55 21H43L29 35') + tip(29, 36, 135),
    solid('grey', 'M8 29c18 2 32 14 34 34H8z') + line('M22 14v17M42 53h20M24 18c17 0 33 16 33 33') + tip(22, 18, 182) + tip(57, 53, 88),
    solid('grey', 'M8 33h18v15h28v17H8z') + line('M25.500 10v20M54 47.500h7M27 17c15 0 29 14 29 29') + tip(26, 17, 185) + tip(56, 48, 85),
    solid('grey', 'M8 34h17v17h14v14H8z') + line('M24.500 13v21M25 50.500h37M27 17c15 0 30 14 30 31') + tip(25, 17, 185) + tip(57, 50, 88),
    solid('grey', 'M30 29l17 23H11z') + line('M30 28 41 13M10 52h52') + tip(38, 19, 48) + tip(55, 53, -90),
    line('M42 30v31') + '<path class="faint" d="M22 21h40"/>',
    line('M31 30h30') + '<path class="faint" d="M20 11v38"/>',
    '<rect x="10.500" y="10.500" width="52" height="52" stroke="#aaa" stroke-dasharray="7 4"/><path d="M28 33.500h17v3H28z" fill="#fff" stroke="none"/><path d="M28 37.500h17" stroke="#ddd" stroke-width="3" stroke-dasharray="2 1"/>',
    '<path d="M36.500 8v55M8 36.500h56" stroke-dasharray="3 4 3 4 14 4"/>'
];

document.getElementById('shapes').innerHTML = shapes.map((body, i) => {
    const mark = i === 20 ? '' : '<path class="mark" d="M3.500 1.500h2l2.500 2v2l-2.500 2.500h-2L1 5.500v-2z"/>';
    return `<button class="shape" aria-label="Dimension ${i + 1}"><svg viewBox="0 0 72 72">${body}${mark}</svg></button>`;
}).join('');

// bg, fill, stroke, stroke width, connector color, connector width, arrow size (0 = open arrow)
const themes = [
    ['#f8f8f8', '#fff', '#222', 1.8, '#111', 1.8, 11],
    ['#e9eef8', '#fff', '#46508a', 1.8, '#46508a', 1, 8],
    ['#fff', '#e8f8e9', '#79d987', 1.8, '#79d987', 1.8, 0],
    ['#fff', '#a08cff', '#fff', 1.5, '#161616', 1, 8],
    ['#2b2d38', '#fff', '#fff', 0.5, '#ccc', 1, 8],
    ['#0e151f', 'none', '#a3cff2', 2.6, '#6db5ec', 2.6, 9],
    ['#1f1f1f', 'none', '#eee', 2.6, '#eee', 2.6, 9],
    ['#1f1f1f', 'none', '#ac99ee', 2.6, '#8468f5', 2.6, 9],
    ['#2e2e2e', 'none', '#98bbd9', 2.6, '#ddd', 1, 8],
    ['#fff', '#fff', '#ae9ce8', 2, '#ae9ce8', 1.8, 0],
    ['#fff', '#231f23', '#231f23', 1, '#222', 1, 8],
    ['#fff', '#f2f7f6', '#42ad88', 3, '#444', 1.8, 11],
    ['#fff', '#ff8286', '#3a2c2d', 1.8, '#2c2c2c', 1.8, 11],
    ['#fff', '#b6edb8', '#b6edb8', 0.5, '#55a25f', 1, 8],
    ['#fff', '#fff0a8', '#8b815c', 1, '#333', 1, 8],
    ['#fff', '#d1f0f5', '#30383c', 1.8, '#333', 1, 8]
];

function head(x, y, deg, size, color, width) {
    const d = size ? `M0 0l${-size} ${-size / 2}v${size}z` : 'M-6-7 1 0-6 7';
    const paint = size ? `fill="${color}" stroke="none"` : `stroke-width="${width}"`;
    return `<path d="${d}" ${paint} transform="translate(${x} ${y}) rotate(${deg})"/>`;
}

const list = document.getElementById('themes');
list.innerHTML = themes.map(([bg, fill, stroke, sw, conn, cw, size], i) => `
    <button class="theme${i === 6 ? ' selected' : ''}" style="background: ${bg}" aria-label="Theme ${i + 1}">
        <svg viewBox="0 0 165 132">
            <g fill="${fill}" stroke="${stroke}" stroke-width="${sw}">
                <rect x="30" y="27" width="36" height="20" rx="4"/>
                <rect x="97" y="27" width="40" height="20" rx="10"/>
                <circle cx="49.500" cy="86" r="17.500"/>
                <path d="M114.700 76.500q2-1.500 4 0l15.500 11q2 1.500 0 3l-15.500 11.500q-2 1.500-4 0L99 90.500q-2-1.500 0-3z"/>
            </g>
            <g stroke="${conn}" stroke-linecap="butt">
                <path d="M66 37h26M116.500 47v24M97 89.500H72" stroke-width="${cw}"/>
                ${head(96, 37, 0, size, conn, cw)}${head(116.500, 75, 90, size, conn, cw)}${head(67, 89.500, 180, size, conn, cw)}
            </g>
        </svg>
    </button>`).join('');
list.scrollTop = 71;

// Drawing grid
const PITCH = 28.35;

function drawGrid() {
    const grid = document.getElementById('grid');
    const { width, height } = grid.getBoundingClientRect();
    let minor = '';
    let major = `M.5.5H${width - 0.5}V${height - 0.5}H.5z`;
    for (let i = 1; i * PITCH < width; i++) {
        const d = `M${Math.round(i * PITCH) + 0.5} 0v${height}`;
        if (i % 2) minor += d; else major += d;
    }
    for (let i = 1; i * PITCH < height; i++) {
        const d = `M0 ${Math.round(i * PITCH) + 0.5}h${width}`;
        if (i % 2) minor += d; else major += d;
    }
    grid.innerHTML = `<path class="minor" d="${minor}"/><path class="major" d="${major}"/>`;
}

drawGrid();
window.addEventListener('resize', drawGrid);
```
